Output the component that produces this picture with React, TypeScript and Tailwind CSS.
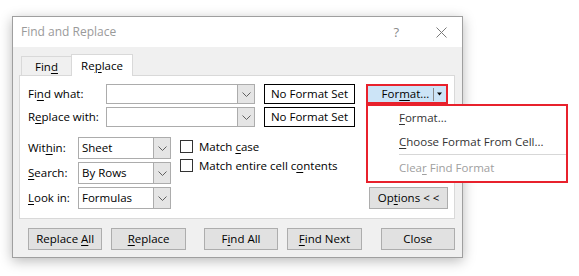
import React from 'react';

const U: React.FC<{ children: React.ReactNode }> = ({ children }) => (
  <span className="underline decoration-1 underline-offset-[2px]">{children}</span>
);

const Chevron = () => (
  <svg width="9" height="5" viewBox="0 0 9 5" fill="none">
    <polyline points="0.5,0.5 4.5,4.5 8.5,0.5" stroke="#606060" strokeWidth="1" />
  </svg>
);

const Combo: React.FC<{ width: string; height: string; value?: string }> = ({ width, height, value }) => (
  <div className={`flex ${width} ${height} border border-[#acacac] bg-white`}>
    <div className="flex flex-1 items-center pl-[3px]">{value}</div>
    <div className="flex w-[17px] items-center justify-center border-l border-[#acacac] bg-[#e5e5e5]">
      <Chevron />
    </div>
  </div>
);

const Btn: React.FC<{ children: React.ReactNode; className?: string }> = ({ children, className = '' }) => (
  <div
    className={`flex h-[22px] w-[75px] items-center justify-center border border-[#adadad] bg-[#e1e1e1] ${className}`}
  >
    <span>{children}</span>
  </div>
);

const Check: React.FC<{ children: React.ReactNode }> = ({ children }) => (
  <div className="flex h-[19px] items-center gap-[6px]">
    <div className="h-[13px] w-[13px] border border-[#333] bg-white" />
    <span>{children}</span>
  </div>
);

export default function App() {
  return (
    <div className="relative min-h-screen bg-white pl-[12px] pt-[16px] font-['Open_Sans',sans-serif] text-[11.5px] leading-none text-black">
      <div className="flex h-[242px] w-[451px] flex-col border border-[#9f9f9f] bg-[#f0f0f0] shadow-[0_3px_12px_rgba(0,0,0,0.28)]">
        {/* title bar */}
        <div className="flex h-[30px] items-center bg-white pl-[8px] pr-[15px] text-[#9a9a9a]">
          <span className="flex-1 text-[12px]">Find and Replace</span>
          <span className="mr-[37px] text-[13px] text-[#8a8a8a]">?</span>
          <svg width="11" height="11" viewBox="0 0 11 11">
            <path d="M0.5 0.5 L10.5 10.5 M10.5 0.5 L0.5 10.5" stroke="#7a7a7a" strokeWidth="1" />
          </svg>
        </div>

        <div className="flex flex-col pl-[6px] pr-[7px] pt-[7px]">
          {/* tabs */}
          <div className="flex h-[21px] items-end pl-[2px]">
            <div className="flex h-[19px] w-[50px] items-center justify-center border border-b-0 border-r-0 border-[#d9d9d9] pt-[1px]">
              <span>
                Fin<U>d</U>
              </span>
            </div>
            <div className="relative z-10 -mb-px flex h-[22px] w-[62px] items-center justify-center border border-b-0 border-[#d9d9d9] bg-white">
              <span>
                Re<U>p</U>lace
              </span>
            </div>
          </div>

          {/* panel */}
          <div className="flex h-[144px] flex-col border border-[#d9d9d9] bg-white pl-[8px] pr-[6px] pt-[8px]">
            <div className="flex h-[20px] items-center">
              <span className="w-[78px]">
                Fi<U>n</U>d what:
              </span>
              <Combo width="w-[149px]" height="h-[20px]" />
              <div className="ml-[9px] flex h-[20px] w-[91px] items-center justify-center border border-black">
                No Format Set
              </div>
              <div className="ml-[11px] flex h-[20px] w-[82px] items-center border-2 border-[#e8212c] bg-[#cce4f7]">
                <span className="flex-1 pl-[10px] text-center">
                  For<U>m</U>at...
                </span>
                <div className="h-[13px] w-px bg-[#8a8a8a]" />
                <svg width="10" height="6" viewBox="0 0 10 6" className="mx-[1px]">
                  <path d="M2 1.5 L7 1.5 L4.5 4.5 Z" fill="#000" />
                </svg>
              </div>
            </div>
            <div className="mt-[3px] flex h-[20px] items-center">
              <span className="w-[78px]">
                R<U>e</U>place with:
              </span>
              <Combo width="w-[149px]" height="h-[20px]" />
              <div className="ml-[9px] flex h-[20px] w-[91px] items-center justify-center border border-black">
                No Format Set
              </div>
            </div>

            <div className="mt-[10px] flex">
              <div className="flex flex-col gap-[3px]">
                <div className="flex items-center">
                  <span className="w-[50px]">
                    Wit<U>h</U>in:
                  </span>
                  <Combo width="w-[93px]" height="h-[22px]" value="Sheet" />
                </div>
                <div className="flex items-center">
                  <span className="w-[50px]">
                    <U>S</U>earch:
                  </span>
                  <Combo width="w-[93px]" height="h-[22px]" value="By Rows" />
                </div>
                <div className="flex items-center">
                  <span className="w-[50px]">
                    <U>L</U>ook in:
                  </span>
                  <Combo width="w-[93px]" height="h-[22px]" value="Formulas" />
                </div>
              </div>
              <div className="ml-[9px] flex flex-col">
                <Check>
                  Match <U>c</U>ase
                </Check>
                <Check>
                  Match entire cell c<U>o</U>ntents
                </Check>
              </div>
              <div className="flex flex-1 items-end justify-end">
                <div className="flex h-[22px] w-[79px] items-center justify-center border border-[#adadad] bg-[#e1e1e1]">
                  <span>
                    Op<U>t</U>ions &lt; &lt;
                  </span>
                </div>
              </div>
            </div>
          </div>

          {/* bottom buttons */}
          <div className="mt-[9px] flex pl-[9px]">
            <Btn>
              Replace <U>A</U>ll
            </Btn>
            <Btn className="ml-[9px]">
              <U>R</U>eplace
            </Btn>
            <Btn className="ml-[18px]">
              F<U>i</U>nd All
            </Btn>
            <Btn className="ml-[9px]">
              <U>F</U>ind Next
            </Btn>
            <Btn className="ml-[19px]">Close</Btn>
          </div>
        </div>
      </div>

      {/* dropdown menu */}
      <div className="absolute left-[366px] top-[104px] flex h-[79px] w-[202px] flex-col border-2 border-[#e8212c] bg-white">
        <div className="flex h-[24px] items-center pl-[31px] text-[#333]">
          <span>
            <U>F</U>ormat...
          </span>
        </div>
        <div className="flex h-[24px] items-center pl-[31px] text-[#333]">
          <span>
            <U>C</U>hoose Format From Cell...
          </span>
        </div>
        <div className="ml-[31px] h-px bg-[#d7d7d7]" />
        <div className="flex h-[26px] items-center pl-[31px] text-[#a0a0a0]">
          <span>
            Clea<U>r</U> Find Format
          </span>
        </div>
      </div>
    </div>
  );
}
